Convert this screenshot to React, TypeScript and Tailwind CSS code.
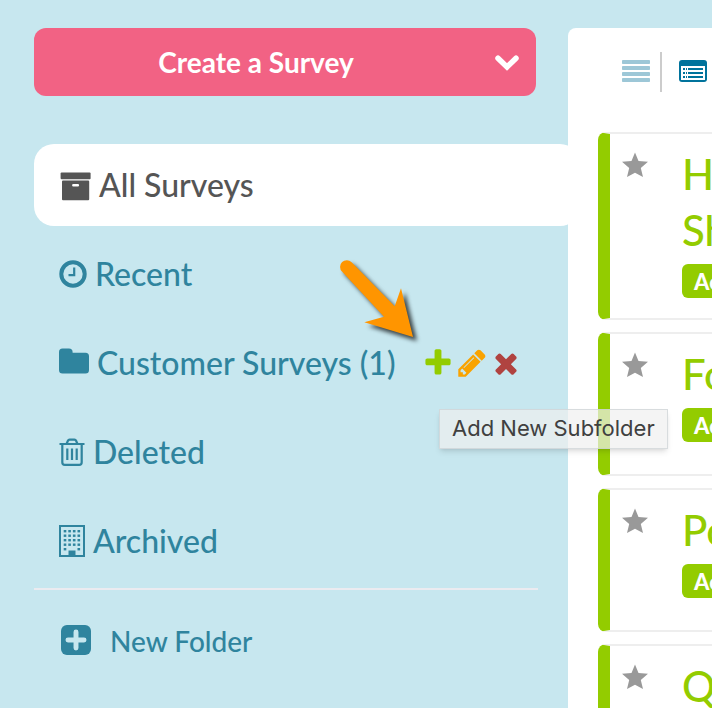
import React from "react";

type Survey = {
  id: number;
  lines: string[];
};

const surveys: Survey[] = [
  { id: 1, lines: ["H", "Sh"] },
  { id: 2, lines: ["Fo"] },
  { id: 3, lines: ["Po"] },
  { id: 4, lines: ["Q"] },
];

const ArchiveIcon = () => (
  <svg className="h-8 w-8" viewBox="0 -0.8 32 32" fill="currentColor" aria-hidden="true">
    <rect x="1.6" y="2.8" width="30" height="6.6" rx="1" />
    <path
      fillRule="evenodd"
      d="M4 10.600h25.200a1 1 0 0 1 1 1v17.800a1 1 0 0 1-1 1H4a1 1 0 0 1-1-1V11.600a1 1 0 0 1 1-1zm10.300 3.600a1.200 1.200 0 0 0 0 2.400h4.600a1.200 1.200 0 0 0 0-2.400z"
    />
  </svg>
);

const ClockIcon = () => (
  <svg className="h-7 w-7" viewBox="0 0 28 28" fill="none" stroke="currentColor" aria-hidden="true">
    <circle cx="14" cy="14" r="11.7" strokeWidth="4" />
    <path d="M15.200 7.500v7.700h-5.700" strokeWidth="2.200" />
  </svg>
);

const FolderIcon = () => (
  <svg className="mb-1 h-[26px] w-[30px]" viewBox="0 0 30 26" fill="currentColor" aria-hidden="true">
    <path d="M0 4Q0 .5 3.500 .5h6.500Q13.600 .5 13.600 4v.8H26.500Q30 4.800 30 8.300V22q0 3.500-3.500 3.500h-23Q0 25.500 0 22z" />
  </svg>
);

const TrashIcon = () => (
  <svg className="h-7 w-[26px]" viewBox="0 0 26 28" fill="none" stroke="currentColor" strokeWidth="2.2" aria-hidden="true">
    <path d="M.5 6h25M7.500 6l1.400-3.200q.5-1.100 1.600-1.100h5q1.100 0 1.600 1.100l1.400 3.200M3.300 6v18.200q0 2.700 2.500 2.700h14.400q2.500 0 2.500-2.700V6" />
    <path d="M8.300 10.500v11.500M13 10.500v11.500M17.700 10.500v11.500" />
  </svg>
);

const BuildingIcon = () => (
  <svg className="h-8 w-[26px]" viewBox="0 0 26 32" aria-hidden="true">
    <rect x="1" y="1" width="24" height="30" fill="none" stroke="currentColor" strokeWidth="2" />
    {[5, 9.500, 14, 18.500, 23].map(y =>
      [4.700, 9.300, 13.900, 18.500]
        .filter(x => y < 23 || x < 5 || x > 18)
        .map(x => <rect key={`${x}-${y}`} x={x} y={y} width="2.600" height="2.400" fill="currentColor" />)
    )}
    <path d="M9.500 25.500h7V31h-7z" fill="currentColor" />
  </svg>
);

const PlusIcon = () => (
  <svg className="h-8 w-8" viewBox="0 0 1792 1792" fill="currentColor" aria-hidden="true">
    <path d="M1600 736v192q0 40-28 68t-68 28h-416v416q0 40-28 68t-68 28h-192q-40 0-68-28t-28-68v-416h-416q-40 0-68-28t-28-68v-192q0-40 28-68t68-28h416v-416q0-40 28-68t68-28h192q40 0 68 28t28 68v416h416q40 0 68 28t28 68z" />
  </svg>
);

const PencilIcon = () => (
  <svg className="h-8 w-8" viewBox="0 0 1792 1792" fill="currentColor" aria-hidden="true">
    <path d="M491 1536l91-91-235-235-91 91v107h128v128h107zm523-928q0-22-22-22-10 0-17 7l-542 542q-7 7-7 17 0 22 22 22 10 0 17-7l542-542q7-7 7-17zm-54-192l416 416-832 832h-416v-416zm683 96q0 53-37 90l-166 166-416-416 166-165q36-38 90-38 53 0 91 38l235 234q37 39 37 91z" />
  </svg>
);

const TimesIcon = () => (
  <svg className="h-8 w-8" viewBox="0 0 1792 1792" fill="currentColor" aria-hidden="true">
    <path d="M1490 1322q0 40-28 68l-136 136q-28 28-68 28t-68-28l-294-294-294 294q-28 28-68 28t-68-28l-136-136q-28-28-28-68t28-68l294-294-294-294q-28-28-28-68t28-68l136-136q28-28 68-28t68 28l294 294 294-294q28-28 68-28t68 28l136 136q28 28 28 68t-28 68l-294 294 294 294q28 28 28 68z" />
  </svg>
);

const StarIcon = () => (
  <svg className="h-[26px] w-[26px]" viewBox="0 0 26 26" fill="currentColor" aria-hidden="true">
    <path d="M13 .5l3.500 8.600 9.500.6-7.200 6.300 2.200 9-8-4.300-8 4.300 2.200-9L0 9.700l9.500-.6z" />
  </svg>
);

const Arrow = () => (
  <svg
    className="pointer-events-none absolute -top-[66px] left-[298px] h-24 w-24 drop-shadow-[4px_4px_2px_rgba(0,0,0,0.7)]"
    viewBox="0 0 96 96"
    fill="#ff9500"
    aria-hidden="true"
  >
    <path d="M19.600 6.200L62.700 50.300 69 32.300 81 81 32.300 66.300 52 60.700 10 15.600A6.700 6.700 0 0 1 19.600 6.200z" />
  </svg>
);

const NavItem: React.FC<{ icon: React.ReactNode; label: string; active?: boolean }> = ({ icon, label, active }) => {
  return (
    <a
      href="#"
      className={
        active
          ? "-mr-11 flex h-[82px] items-center gap-2 rounded-[20px] bg-white pl-[25px] text-[#555555]"
          : "flex h-[82px] items-center gap-2 pl-[25px]"
      }
    >
      {icon}
      {label}
    </a>
  );
};

const Sidebar = () => {
  return (
    <aside className="relative z-10 w-[568px] shrink-0 pt-7 pr-8 pl-[34px] text-[#2f849e]">
      <button type="button" className="flex h-[68px] w-full items-center rounded-xl bg-[#f26284] text-[28px] font-bold text-white">
        <span className="flex-1">Create a Survey</span>
        <span className="flex w-[58px] justify-center">
          <svg className="h-[18px] w-6" viewBox="0 0 24 18" fill="none" stroke="currentColor" strokeWidth="5.500" strokeLinecap="round" aria-hidden="true">
            <path d="M3 5.200l9 8.800 9-8.800" />
          </svg>
        </span>
      </button>

      <nav className="mt-12 flex flex-col gap-[7px] text-[32px] font-medium">
        <NavItem icon={<ArchiveIcon />} label="All Surveys" active />
        <NavItem icon={<ClockIcon />} label="Recent" />
        <div className="relative flex items-center">
          <NavItem icon={<FolderIcon />} label="Customer Surveys (1)" />
          <div className="ml-[26px] flex gap-[2px]">
            <button type="button" aria-label="Add" aria-describedby="add-tip" className="text-[#93cc00]">
              <PlusIcon />
            </button>
            <button type="button" aria-label="Edit" className="text-[#f9a300]">
              <PencilIcon />
            </button>
            <button type="button" aria-label="Delete" className="text-[#b04340]">
              <TimesIcon />
            </button>
          </div>
          <div
            id="add-tip"
            role="tooltip"
            className="absolute top-[87px] left-[405px] flex h-10 items-center border border-[#c4ccce]/60 bg-[#efefef]/70 px-3 pb-[2px] font-['Inter',sans-serif] text-[22px] font-normal whitespace-nowrap text-[#404040] shadow-md"
          >
            Add New Subfolder
          </div>
          <Arrow />
        </div>
        <NavItem icon={<TrashIcon />} label="Deleted" />
        <NavItem icon={<BuildingIcon />} label="Archived" />
      </nav>

      <hr className="-mr-[2px] mt-[6px] border-t-2 border-[#ebebf0]" />

      <a href="#" className="mt-[27px] flex h-12 items-center gap-[19px] pl-[27px] text-[28px] font-medium">
        <svg className="mb-[2px] h-[30px] w-[30px]" viewBox="0 0 28 28" aria-hidden="true">
          <rect width="28" height="28" rx="5.500" fill="currentColor" />
          <path d="M14 6.500v15M6.500 14h15" stroke="#c7e7ef" strokeWidth="4.600" strokeLinecap="round" />
        </svg>
        New Folder
      </a>
    </aside>
  );
};

const SurveyCard: React.FC<{ survey: Survey }> = ({ survey }) => {
  return (
    <li className="flex min-h-36 rounded-l-lg border-y-2 border-l-[12px] border-y-[#eeeeee] border-l-[#93cc00] pt-3 pb-5 pl-3">
      <button type="button" aria-label="Favorite" className="mt-[6px] mr-[34px] h-[26px] w-[26px] shrink-0 text-[#999999]">
        <StarIcon />
      </button>
      <div className="whitespace-nowrap">
        <h2 className="text-[42px] leading-[56px] font-medium text-[#93cc00]">
          {survey.lines.map(line => (
            <span key={line} className="block">
              {line}
            </span>
          ))}
        </h2>
        <span className="mt-[6px] flex h-[34px] w-20 items-center rounded-md bg-[#93cc00] px-3 text-[22px] font-black text-white">
          Active
        </span>
      </div>
    </li>
  );
};

const SurveyList = () => {
  return (
    <main className="mt-7 min-w-0 flex-1 overflow-hidden rounded-tl-lg bg-white pt-6 pl-[30px]">
      <div className="flex h-10 items-start pl-6">
        <button type="button" aria-label="Compact view" className="mt-2 shrink-0">
          <svg className="h-[22px] w-7" viewBox="0 0 28 22" fill="#9dc7d7" aria-hidden="true">
            {[0, 6, 12, 18].map(y => (
              <rect key={y} y={y} width="28" height="4" rx="0.800" />
            ))}
          </svg>
        </button>
        <div className="mr-[17px] ml-[10px] h-10 w-[2px] shrink-0 bg-[#cccccc]" />
        <button type="button" aria-label="Detailed view" className="mt-2 shrink-0">
          <svg className="h-[22px] w-7" viewBox="0 0 28 22" aria-hidden="true">
            <rect width="28" height="22" rx="3" fill="#00739c" />
            <rect x="2" y="6" width="24" height="14" fill="white" />
            {[8, 12, 16].map(y => (
              <path key={y} d={`M4 ${y + 1}h2M7 ${y + 1}h1M9 ${y + 1}h15`} stroke="#00739c" strokeWidth="2" />
            ))}
          </svg>
        </button>
      </div>
      <ul className="mt-10 flex flex-col gap-3">
        {surveys.map(s => (
          <SurveyCard key={s.id} survey={s} />
        ))}
      </ul>
    </main>
  );
};

const App = () => {
  return (
    <div className="flex h-screen overflow-hidden bg-[#c7e7ef] font-['Lato',sans-serif]">
      <Sidebar />
      <SurveyList />
    </div>
  );
};

export default App;
